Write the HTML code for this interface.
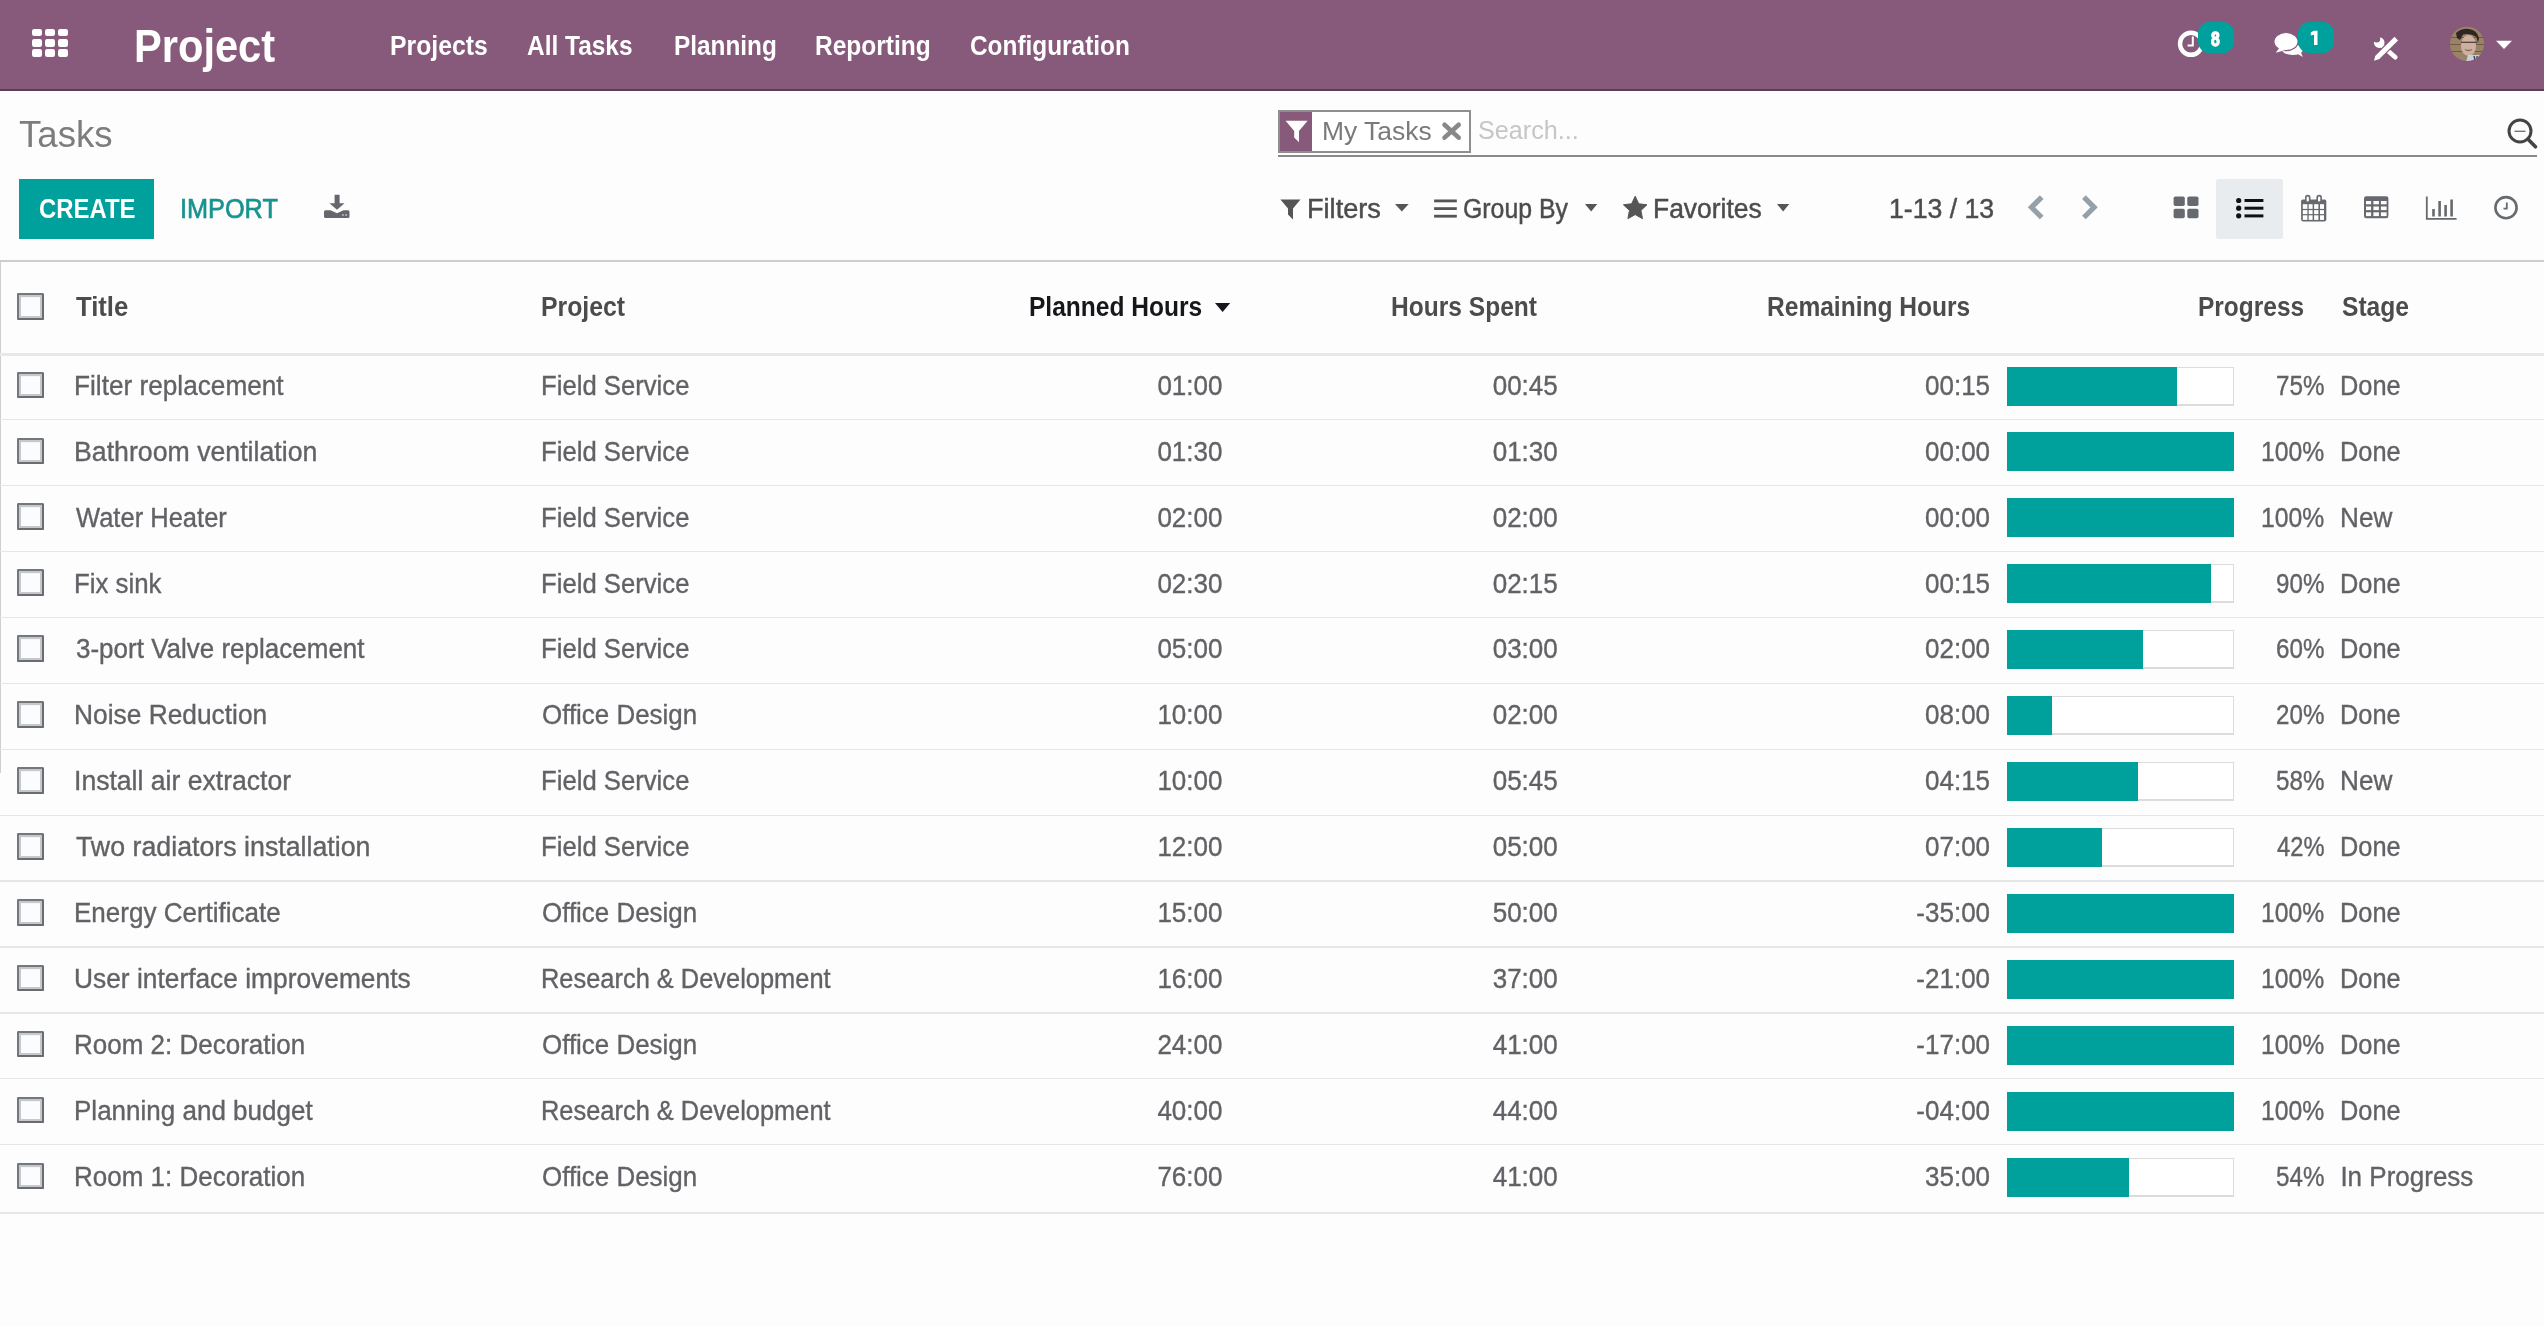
<!DOCTYPE html>
<html><head><meta charset="utf-8"><title>Tasks - Odoo</title>
<style>
html,body{margin:0;padding:0;}
body{width:2544px;height:1326px;overflow:hidden;position:relative;background:#fdfdfd;font-family:"Liberation Sans", sans-serif;}
#wrap{position:absolute;left:0;top:0;width:2544px;height:1326px;background:#fdfdfd;}
</style></head><body><div id="wrap">
<div style="position:absolute;left:0px;top:0px;width:2544px;height:89px;background:#875A7B;"></div>
<div style="position:absolute;left:0px;top:89px;width:2544px;height:2px;background:#5a3f52;"></div>
<div style="position:absolute;left:32px;top:28.7px;width:10.2px;height:7.8px;background:#ffffff;border-radius:2.2px;"></div>
<div style="position:absolute;left:32px;top:38.9px;width:10.2px;height:7.8px;background:#ffffff;border-radius:2.2px;"></div>
<div style="position:absolute;left:32px;top:49.1px;width:10.2px;height:7.8px;background:#ffffff;border-radius:2.2px;"></div>
<div style="position:absolute;left:45px;top:28.7px;width:10.2px;height:7.8px;background:#ffffff;border-radius:2.2px;"></div>
<div style="position:absolute;left:45px;top:38.9px;width:10.2px;height:7.8px;background:#ffffff;border-radius:2.2px;"></div>
<div style="position:absolute;left:45px;top:49.1px;width:10.2px;height:7.8px;background:#ffffff;border-radius:2.2px;"></div>
<div style="position:absolute;left:58px;top:28.7px;width:10.2px;height:7.8px;background:#ffffff;border-radius:2.2px;"></div>
<div style="position:absolute;left:58px;top:38.9px;width:10.2px;height:7.8px;background:#ffffff;border-radius:2.2px;"></div>
<div style="position:absolute;left:58px;top:49.1px;width:10.2px;height:7.8px;background:#ffffff;border-radius:2.2px;"></div>
<svg style="position:absolute;left:2170px;top:22px" width="40" height="44" viewBox="2170 22 40 44">
<circle cx="2191" cy="43.8" r="11" fill="none" stroke="#fff" stroke-width="4.4"/>
<path d="M2192.8 36.6 V45.4 H2187.6" fill="none" stroke="#fff" stroke-width="2"/>
</svg>
<div style="position:absolute;left:2198.3px;top:22.4px;width:35.6px;height:30.8px;background:#00A09D;border-radius:11.5px;"></div>
<svg style="position:absolute;left:2270px;top:28px" width="40" height="32" viewBox="2270 28 40 32">
<ellipse cx="2292.5" cy="49.6" rx="10.5" ry="5.4" fill="#fff"/>
<path d="M2296 53 L2302.8 57 L2299.5 49 Z" fill="#fff"/>
<ellipse cx="2286" cy="41.6" rx="12.1" ry="9.1" fill="#fff" stroke="#875A7B" stroke-width="1.2"/>
<path d="M2279.5 47.5 L2275.8 52.8 L2285.5 50 Z" fill="#fff"/>
</svg>
<div style="position:absolute;left:2297.9px;top:22.3px;width:35.8px;height:30.8px;background:#00A09D;border-radius:11.5px;"></div>
<svg style="position:absolute;left:2306px;top:28px" width="16" height="20" viewBox="2306 28 16 20"><path d="M2314 30.8 H2317.5 V45.1 H2314 V34.8 L2310.8 35.4 V32.2 Z" fill="#fff"/></svg>
<svg style="position:absolute;left:2368px;top:32px" width="34" height="32" viewBox="2368 32 34 32">
<path d="M2380 44 L2395.3 57.3" stroke="#fff" stroke-width="4.6" stroke-linecap="round"/>
<circle cx="2379.2" cy="42.6" r="5.3" fill="#fff"/>
<circle cx="2376.7" cy="39.0" r="3.5" fill="#875A7B"/>
<path d="M2394.5 36.8 L2398 40.4 L2379.3 59 L2374 60.7 L2375.2 55.9 Z" fill="#875A7B" stroke="#875A7B" stroke-width="2.4" stroke-linejoin="round"/>
<path d="M2394.5 36.8 L2398 40.4 L2379.3 59 L2374 60.7 L2375.2 55.9 Z" fill="#fff"/>
</svg>
<svg style="position:absolute;left:2449px;top:26px" width="36" height="36" viewBox="0 0 36 36">
<defs><clipPath id="av"><circle cx="18" cy="17.9" r="17.1"/></clipPath><filter id="avb" x="-10%" y="-10%" width="120%" height="120%"><feGaussianBlur stdDeviation="0.7"/></filter></defs>
<g clip-path="url(#av)"><g filter="url(#avb)">
<rect x="0" y="0" width="36" height="36" fill="#9a8266"/>
<path d="M0 11.5 H36 M0 18.5 H36 M0 25.5 H36" stroke="#6f5a46" stroke-width="1.2"/>
<path d="M7 7 Q13 2 20 3 Q28 4 30 12 L29 17 L27.5 11 Q21 7 14 8.5 L11 14 L8 12 Z" fill="#2e2622"/>
<ellipse cx="19.5" cy="19.5" rx="7.6" ry="10.5" fill="#cdb09e"/>
<path d="M12 16.3 H28" stroke="#4a3c36" stroke-width="1.2"/>
<path d="M16 23.5 Q19.5 25.5 23 23.5" stroke="#8a6456" stroke-width="1.3" fill="none"/>
<path d="M19 29 L33 29 L36 36 L17 36 Z" fill="#c9d0da"/>
<path d="M25 30 L26.5 36 M28 30 L28.5 36" stroke="#2f3e5a" stroke-width="1.3"/>
</g></g></svg>
<svg style="position:absolute;left:2494px;top:38px" width="20" height="14" viewBox="2494 38 20 14">
<path d="M2496 40.8 H2512 L2504 49 Z" fill="#fff"/></svg>
<div style="position:absolute;left:1278.4px;top:110.4px;width:192.6px;height:42.5px;background:#ffffff;box-sizing:border-box;border:2px solid #8f8f8f;"></div>
<div style="position:absolute;left:1280.4px;top:112.4px;width:31.8px;height:38.5px;background:#875A7B;"></div>
<svg style="position:absolute;left:1282px;top:118px" width="28" height="28" viewBox="1282 118 28 28">
<path d="M1285.6 120.8 H1307.6 L1299 131 V142.2 L1294.2 137.6 V131 Z" fill="#fff"/></svg>
<svg style="position:absolute;left:1440px;top:120px" width="24" height="22" viewBox="1440 120 24 22">
<path d="M1444.5 124.7 L1458.7 137.6 M1458.7 124.7 L1444.5 137.6" stroke="#888" stroke-width="4.6" stroke-linecap="round"/></svg>
<div style="position:absolute;left:1278px;top:154.6px;width:1259px;height:2.8px;background:#8a8a8a;"></div>
<svg style="position:absolute;left:2502px;top:114px" width="42" height="40" viewBox="2502 114 42 40">
<circle cx="2520" cy="131" r="11" fill="none" stroke="#444" stroke-width="3"/>
<path d="M2527.8 139 L2535.5 146.8" stroke="#444" stroke-width="3.6" stroke-linecap="round"/>
<path d="M2514.5 131.3 H2525.5" stroke="#777" stroke-width="1.4"/></svg>
<div style="position:absolute;left:18.5px;top:179.2px;width:135.8px;height:60.1px;background:#00A09D;"></div>
<svg style="position:absolute;left:320px;top:190px" width="34" height="32" viewBox="320 190 34 32">
<path d="M334.6 194.8 H339.6 V203.2 H344.5 L337 209.8 L329.4 203.2 H334.6 Z" fill="#66676d"/>
<path d="M325.5 210.3 H330.5 L337 213.2 L343.5 210.3 H348 Q349.5 210.3 349.5 211.8 V216.4 Q349.5 217.9 348 217.9 H325.5 Q324 217.9 324 216.4 V211.8 Q324 210.3 325.5 210.3 Z" fill="#66676d"/>
<rect x="342" y="214.2" width="1.8" height="1.6" fill="#b8bcc4"/><rect x="345.2" y="214.2" width="1.8" height="1.6" fill="#b8bcc4"/>
</svg>
<svg style="position:absolute;left:1276px;top:196px" width="28" height="28" viewBox="1276 196 28 28">
<path d="M1280.4 199.5 H1300.5 L1293 208.5 V219.6 L1288 214.5 V208.5 Z" fill="#555555"/></svg>
<svg style="position:absolute;left:1392.5px;top:201.6px" width="17.700000000000045" height="11.5" viewBox="1392.5 201.6 17.700000000000045 11.5"><path d="M1394.5 203.6 H1408.2 L1401.35 211.1 Z" fill="#555555"/></svg>
<svg style="position:absolute;left:1430px;top:196px" width="30" height="26" viewBox="1430 196 30 26">
<rect x="1434.1" y="199.5" width="22.7" height="2.8" fill="#555555"/>
<rect x="1434.1" y="207.2" width="22.7" height="2.8" fill="#555555"/>
<rect x="1434.1" y="214.8" width="22.7" height="2.8" fill="#555555"/></svg>
<svg style="position:absolute;left:1582.6px;top:201.6px" width="16.300000000000182" height="11.5" viewBox="1582.6 201.6 16.300000000000182 11.5"><path d="M1584.6 203.6 H1596.9 L1590.75 211.1 Z" fill="#555555"/></svg>
<svg style="position:absolute;left:1618px;top:192px" width="34" height="30" viewBox="1618 192 34 30">
<path d="M1635.20 196.20 L1638.73 203.75 L1646.99 204.77 L1640.91 210.45 L1642.49 218.63 L1635.20 214.60 L1627.91 218.63 L1629.49 210.45 L1623.41 204.77 L1631.67 203.75 Z" stroke-linejoin="round" stroke-width="1" stroke="#555555" fill="#555555"/></svg>
<svg style="position:absolute;left:1774.8px;top:201.6px" width="16.299999999999955" height="11.5" viewBox="1774.8 201.6 16.299999999999955 11.5"><path d="M1776.8 203.6 H1789.1 L1782.9499999999998 211.1 Z" fill="#555555"/></svg>
<svg style="position:absolute;left:2020px;top:192px" width="86" height="32" viewBox="2020 192 86 32">
<path d="M2041.7 197.1 L2031.5 207.3 L2041.7 217.5" fill="none" stroke="#96a0a9" stroke-width="5.2"/>
<path d="M2083.9 197.1 L2094.1 207.3 L2083.9 217.5" fill="none" stroke="#96a0a9" stroke-width="5.2"/></svg>
<div style="position:absolute;left:2216.2px;top:179.1px;width:66.8px;height:59.6px;background:#e9ecef;border-radius:2px;"></div>
<svg style="position:absolute;left:2170px;top:190px" width="360" height="36" viewBox="2170 190 360 36">
<g fill="#666a6e">
<rect x="2173.6" y="196.4" width="11.2" height="9.6" rx="1.8"/><rect x="2187.3" y="196.4" width="11.2" height="9.6" rx="1.8"/>
<rect x="2173.6" y="208.7" width="11.2" height="9.6" rx="1.8"/><rect x="2187.3" y="208.7" width="11.2" height="9.6" rx="1.8"/>
</g>
<g fill="#111">
<circle cx="2238.7" cy="200.5" r="2.6"/><circle cx="2238.7" cy="208.2" r="2.6"/><circle cx="2238.7" cy="215.8" r="2.6"/>
<rect x="2244.5" y="199" width="18.9" height="3"/><rect x="2244.5" y="206.7" width="18.9" height="3"/><rect x="2244.5" y="214.4" width="18.9" height="3"/>
</g>
<g fill="none" stroke="#666a6e">
<path d="M2426.8 196.4 V218.8 H2456.6" stroke-width="1.8"/>
<circle cx="2506" cy="207.7" r="10.6" stroke-width="2.6"/>
<path d="M2506.8 202.5 V208.6 H2503.5" stroke-width="1.8"/>
</g>
<g fill="#666a6e">
<rect x="2301.1" y="199.4" width="25.2" height="22" rx="1.8"/>
<rect x="2305" y="194.7" width="5.5" height="8.3" rx="2.7"/><rect x="2316.4" y="194.7" width="5.5" height="8.3" rx="2.7"/>
<rect x="2364" y="196.3" width="24.4" height="22" rx="2.2"/>
</g><g fill="#fdfdfd">
<rect x="2306.6" y="196.6" width="2.3" height="5" rx="1.1"/><rect x="2318" y="196.6" width="2.3" height="5" rx="1.1"/>
<rect x="2302.8" y="204.2" width="4.6" height="4.7"/>
<rect x="2308.7" y="204.2" width="3.9" height="4.7"/>
<rect x="2314.1" y="204.2" width="4.3" height="4.7"/>
<rect x="2320" y="204.2" width="4.0" height="4.7"/>
<rect x="2302.8" y="210.1" width="4.6" height="4.0"/>
<rect x="2308.7" y="210.1" width="3.9" height="4.0"/>
<rect x="2314.1" y="210.1" width="4.3" height="4.0"/>
<rect x="2320" y="210.1" width="4.0" height="4.0"/>
<rect x="2302.8" y="215.3" width="4.6" height="4.6"/>
<rect x="2308.7" y="215.3" width="3.9" height="4.6"/>
<rect x="2314.1" y="215.3" width="4.3" height="4.6"/>
<rect x="2320" y="215.3" width="4.0" height="4.6"/>
<rect x="2366" y="201.0" width="5.1" height="3.3"/>
<rect x="2373.4" y="201.0" width="5.5" height="3.3"/>
<rect x="2380.9" y="201.0" width="5.7" height="3.3"/>
<rect x="2366" y="206.5" width="5.1" height="3.6"/>
<rect x="2373.4" y="206.5" width="5.5" height="3.6"/>
<rect x="2380.9" y="206.5" width="5.7" height="3.6"/>
<rect x="2366" y="212.3" width="5.1" height="3.8"/>
<rect x="2373.4" y="212.3" width="5.5" height="3.8"/>
<rect x="2380.9" y="212.3" width="5.7" height="3.8"/>
</g>
<g fill="#666a6e">
<rect x="2432.2" y="209" width="2.6" height="7.5"/><rect x="2438.3" y="201" width="2.6" height="15.5"/>
<rect x="2444.3" y="205" width="2.6" height="11.5"/><rect x="2450.3" y="199.5" width="2.6" height="17"/>
</g>
</svg>
<div style="position:absolute;left:0px;top:260px;width:2544px;height:2.2px;background:#cdcdcd;"></div>
<div style="position:absolute;left:0px;top:262px;width:1.4px;height:511px;background:#cfcfcf;"></div>
<div style="position:absolute;left:0px;top:353.2px;width:2544px;height:2.8px;background:#e7e8ea;"></div>
<div style="position:absolute;left:17px;top:293.3px;width:26.8px;height:26.6px;box-sizing:border-box;border:2.3px solid #74777b;border-right-color:#6a6c70;border-bottom-color:#6a6c70;border-radius:1.5px;background:#fbfcfd;box-shadow:inset 0 0 0 2px #c5c8cc,inset 0 3px 1px -1px #b5b9bd"></div>
<svg style="position:absolute;left:1212.6px;top:300.9px" width="19.200000000000045" height="12.900000000000034" viewBox="1212.6 300.9 19.200000000000045 12.900000000000034"><path d="M1214.6 302.9 H1229.8 L1222.1999999999998 311.8 Z" fill="#15171a"/></svg>
<div style="position:absolute;left:17px;top:371.6px;width:26.8px;height:26.6px;box-sizing:border-box;border:2.3px solid #74777b;border-right-color:#6a6c70;border-bottom-color:#6a6c70;border-radius:1.5px;background:#fbfcfd;box-shadow:inset 0 0 0 2px #c5c8cc,inset 0 3px 1px -1px #b5b9bd"></div>
<div style="position:absolute;left:2006.5px;top:366.50px;width:227.5px;height:39px;box-sizing:border-box;border:1px solid #dcdcdc;border-bottom-width:2px;background:#fff"></div>
<div style="position:absolute;left:2006.5px;top:366.5px;width:170.625px;height:39px;background:#00A09D;"></div>
<div style="position:absolute;left:0px;top:419.0px;width:2544px;height:1.3px;background:#e6e6e6;"></div>
<div style="position:absolute;left:17px;top:437.52000000000004px;width:26.8px;height:26.6px;box-sizing:border-box;border:2.3px solid #74777b;border-right-color:#6a6c70;border-bottom-color:#6a6c70;border-radius:1.5px;background:#fbfcfd;box-shadow:inset 0 0 0 2px #c5c8cc,inset 0 3px 1px -1px #b5b9bd"></div>
<div style="position:absolute;left:2006.5px;top:432.42px;width:227.5px;height:39px;box-sizing:border-box;border:1px solid #dcdcdc;border-bottom-width:2px;background:#fff"></div>
<div style="position:absolute;left:2006.5px;top:432.42px;width:227.5px;height:39px;background:#00A09D;"></div>
<div style="position:absolute;left:0px;top:484.92px;width:2544px;height:1.3px;background:#e6e6e6;"></div>
<div style="position:absolute;left:17px;top:503.44000000000005px;width:26.8px;height:26.6px;box-sizing:border-box;border:2.3px solid #74777b;border-right-color:#6a6c70;border-bottom-color:#6a6c70;border-radius:1.5px;background:#fbfcfd;box-shadow:inset 0 0 0 2px #c5c8cc,inset 0 3px 1px -1px #b5b9bd"></div>
<div style="position:absolute;left:2006.5px;top:498.34px;width:227.5px;height:39px;box-sizing:border-box;border:1px solid #dcdcdc;border-bottom-width:2px;background:#fff"></div>
<div style="position:absolute;left:2006.5px;top:498.34px;width:227.5px;height:39px;background:#00A09D;"></div>
<div style="position:absolute;left:0px;top:550.84px;width:2544px;height:1.3px;background:#e6e6e6;"></div>
<div style="position:absolute;left:17px;top:569.36px;width:26.8px;height:26.6px;box-sizing:border-box;border:2.3px solid #74777b;border-right-color:#6a6c70;border-bottom-color:#6a6c70;border-radius:1.5px;background:#fbfcfd;box-shadow:inset 0 0 0 2px #c5c8cc,inset 0 3px 1px -1px #b5b9bd"></div>
<div style="position:absolute;left:2006.5px;top:564.26px;width:227.5px;height:39px;box-sizing:border-box;border:1px solid #dcdcdc;border-bottom-width:2px;background:#fff"></div>
<div style="position:absolute;left:2006.5px;top:564.26px;width:204.75px;height:39px;background:#00A09D;"></div>
<div style="position:absolute;left:0px;top:616.76px;width:2544px;height:1.3px;background:#e6e6e6;"></div>
<div style="position:absolute;left:17px;top:635.28px;width:26.8px;height:26.6px;box-sizing:border-box;border:2.3px solid #74777b;border-right-color:#6a6c70;border-bottom-color:#6a6c70;border-radius:1.5px;background:#fbfcfd;box-shadow:inset 0 0 0 2px #c5c8cc,inset 0 3px 1px -1px #b5b9bd"></div>
<div style="position:absolute;left:2006.5px;top:630.18px;width:227.5px;height:39px;box-sizing:border-box;border:1px solid #dcdcdc;border-bottom-width:2px;background:#fff"></div>
<div style="position:absolute;left:2006.5px;top:630.18px;width:136.5px;height:39px;background:#00A09D;"></div>
<div style="position:absolute;left:0px;top:682.68px;width:2544px;height:1.3px;background:#e6e6e6;"></div>
<div style="position:absolute;left:17px;top:701.2px;width:26.8px;height:26.6px;box-sizing:border-box;border:2.3px solid #74777b;border-right-color:#6a6c70;border-bottom-color:#6a6c70;border-radius:1.5px;background:#fbfcfd;box-shadow:inset 0 0 0 2px #c5c8cc,inset 0 3px 1px -1px #b5b9bd"></div>
<div style="position:absolute;left:2006.5px;top:696.10px;width:227.5px;height:39px;box-sizing:border-box;border:1px solid #dcdcdc;border-bottom-width:2px;background:#fff"></div>
<div style="position:absolute;left:2006.5px;top:696.1px;width:45.5px;height:39px;background:#00A09D;"></div>
<div style="position:absolute;left:0px;top:748.6px;width:2544px;height:1.3px;background:#e6e6e6;"></div>
<div style="position:absolute;left:17px;top:767.12px;width:26.8px;height:26.6px;box-sizing:border-box;border:2.3px solid #74777b;border-right-color:#6a6c70;border-bottom-color:#6a6c70;border-radius:1.5px;background:#fbfcfd;box-shadow:inset 0 0 0 2px #c5c8cc,inset 0 3px 1px -1px #b5b9bd"></div>
<div style="position:absolute;left:2006.5px;top:762.02px;width:227.5px;height:39px;box-sizing:border-box;border:1px solid #dcdcdc;border-bottom-width:2px;background:#fff"></div>
<div style="position:absolute;left:2006.5px;top:762.02px;width:131.95px;height:39px;background:#00A09D;"></div>
<div style="position:absolute;left:0px;top:814.52px;width:2544px;height:1.3px;background:#e6e6e6;"></div>
<div style="position:absolute;left:17px;top:833.04px;width:26.8px;height:26.6px;box-sizing:border-box;border:2.3px solid #74777b;border-right-color:#6a6c70;border-bottom-color:#6a6c70;border-radius:1.5px;background:#fbfcfd;box-shadow:inset 0 0 0 2px #c5c8cc,inset 0 3px 1px -1px #b5b9bd"></div>
<div style="position:absolute;left:2006.5px;top:827.94px;width:227.5px;height:39px;box-sizing:border-box;border:1px solid #dcdcdc;border-bottom-width:2px;background:#fff"></div>
<div style="position:absolute;left:2006.5px;top:827.94px;width:95.55px;height:39px;background:#00A09D;"></div>
<div style="position:absolute;left:0px;top:880.44px;width:2544px;height:1.3px;background:#e6e6e6;"></div>
<div style="position:absolute;left:17px;top:898.96px;width:26.8px;height:26.6px;box-sizing:border-box;border:2.3px solid #74777b;border-right-color:#6a6c70;border-bottom-color:#6a6c70;border-radius:1.5px;background:#fbfcfd;box-shadow:inset 0 0 0 2px #c5c8cc,inset 0 3px 1px -1px #b5b9bd"></div>
<div style="position:absolute;left:2006.5px;top:893.86px;width:227.5px;height:39px;box-sizing:border-box;border:1px solid #dcdcdc;border-bottom-width:2px;background:#fff"></div>
<div style="position:absolute;left:2006.5px;top:893.86px;width:227.5px;height:39px;background:#00A09D;"></div>
<div style="position:absolute;left:0px;top:946.36px;width:2544px;height:1.3px;background:#e6e6e6;"></div>
<div style="position:absolute;left:17px;top:964.88px;width:26.8px;height:26.6px;box-sizing:border-box;border:2.3px solid #74777b;border-right-color:#6a6c70;border-bottom-color:#6a6c70;border-radius:1.5px;background:#fbfcfd;box-shadow:inset 0 0 0 2px #c5c8cc,inset 0 3px 1px -1px #b5b9bd"></div>
<div style="position:absolute;left:2006.5px;top:959.78px;width:227.5px;height:39px;box-sizing:border-box;border:1px solid #dcdcdc;border-bottom-width:2px;background:#fff"></div>
<div style="position:absolute;left:2006.5px;top:959.78px;width:227.5px;height:39px;background:#00A09D;"></div>
<div style="position:absolute;left:0px;top:1012.28px;width:2544px;height:1.3px;background:#e6e6e6;"></div>
<div style="position:absolute;left:17px;top:1030.8000000000002px;width:26.8px;height:26.6px;box-sizing:border-box;border:2.3px solid #74777b;border-right-color:#6a6c70;border-bottom-color:#6a6c70;border-radius:1.5px;background:#fbfcfd;box-shadow:inset 0 0 0 2px #c5c8cc,inset 0 3px 1px -1px #b5b9bd"></div>
<div style="position:absolute;left:2006.5px;top:1025.70px;width:227.5px;height:39px;box-sizing:border-box;border:1px solid #dcdcdc;border-bottom-width:2px;background:#fff"></div>
<div style="position:absolute;left:2006.5px;top:1025.7px;width:227.5px;height:39px;background:#00A09D;"></div>
<div style="position:absolute;left:0px;top:1078.2px;width:2544px;height:1.3px;background:#e6e6e6;"></div>
<div style="position:absolute;left:17px;top:1096.72px;width:26.8px;height:26.6px;box-sizing:border-box;border:2.3px solid #74777b;border-right-color:#6a6c70;border-bottom-color:#6a6c70;border-radius:1.5px;background:#fbfcfd;box-shadow:inset 0 0 0 2px #c5c8cc,inset 0 3px 1px -1px #b5b9bd"></div>
<div style="position:absolute;left:2006.5px;top:1091.62px;width:227.5px;height:39px;box-sizing:border-box;border:1px solid #dcdcdc;border-bottom-width:2px;background:#fff"></div>
<div style="position:absolute;left:2006.5px;top:1091.62px;width:227.5px;height:39px;background:#00A09D;"></div>
<div style="position:absolute;left:0px;top:1144.12px;width:2544px;height:1.3px;background:#e6e6e6;"></div>
<div style="position:absolute;left:17px;top:1162.6399999999999px;width:26.8px;height:26.6px;box-sizing:border-box;border:2.3px solid #74777b;border-right-color:#6a6c70;border-bottom-color:#6a6c70;border-radius:1.5px;background:#fbfcfd;box-shadow:inset 0 0 0 2px #c5c8cc,inset 0 3px 1px -1px #b5b9bd"></div>
<div style="position:absolute;left:2006.5px;top:1157.54px;width:227.5px;height:39px;box-sizing:border-box;border:1px solid #dcdcdc;border-bottom-width:2px;background:#fff"></div>
<div style="position:absolute;left:2006.5px;top:1157.54px;width:122.85px;height:39px;background:#00A09D;"></div>
<div style="position:absolute;left:0px;top:1212px;width:2544px;height:2px;background:#e6e6e6;"></div>
<div style="position:absolute;left:133.99px;top:23.26px;font-size:46px;line-height:46px;font-weight:bold;color:#ffffff;white-space:nowrap;transform:scale(0.9048,1.0000);transform-origin:0 38.94px;">Project</div>
<div style="position:absolute;left:389.58px;top:33.34px;font-size:27px;line-height:27px;font-weight:bold;color:#ffffff;white-space:nowrap;transform:scale(0.9165,1.0000);transform-origin:0 22.86px;">Projects</div>
<div style="position:absolute;left:527.10px;top:33.34px;font-size:27px;line-height:27px;font-weight:bold;color:#ffffff;white-space:nowrap;transform:scale(0.9053,1.0000);transform-origin:0 22.86px;">All Tasks</div>
<div style="position:absolute;left:673.60px;top:33.34px;font-size:27px;line-height:27px;font-weight:bold;color:#ffffff;white-space:nowrap;transform:scale(0.9013,1.0000);transform-origin:0 22.86px;">Planning</div>
<div style="position:absolute;left:815.09px;top:33.34px;font-size:27px;line-height:27px;font-weight:bold;color:#ffffff;white-space:nowrap;transform:scale(0.9081,1.0000);transform-origin:0 22.86px;">Reporting</div>
<div style="position:absolute;left:969.70px;top:33.34px;font-size:27px;line-height:27px;font-weight:bold;color:#ffffff;white-space:nowrap;transform:scale(0.9033,1.0000);transform-origin:0 22.86px;">Configuration</div>
<div style="position:absolute;left:2211.20px;top:28.42px;font-size:21px;line-height:21px;font-weight:bold;color:#ffffff;white-space:nowrap;transform:scale(0.7500,1.0000);transform-origin:0 17.78px;-webkit-text-stroke:1.3px #fff;">8</div>
<div style="position:absolute;left:19.20px;top:116.18px;font-size:37px;line-height:37px;font-weight:normal;color:#7d7d7d;white-space:nowrap;transform:scale(0.9907,1.0000);transform-origin:0 31.32px;">Tasks</div>
<div style="position:absolute;left:1322.39px;top:118.74px;font-size:25px;line-height:25px;font-weight:normal;color:#7a7a7a;white-space:nowrap;transform:scale(1.0573,1.0000);transform-origin:0 21.16px;">My Tasks</div>
<div style="position:absolute;left:1477.89px;top:118.14px;font-size:25px;line-height:25px;font-weight:normal;color:#c6c6c6;white-space:nowrap;transform:scale(1.0082,1.0000);transform-origin:0 21.16px;">Search...</div>
<div style="position:absolute;left:38.81px;top:196.24px;font-size:27px;line-height:27px;font-weight:bold;color:#ffffff;white-space:nowrap;transform:scale(0.8860,1.0000);transform-origin:0 22.86px;">CREATE</div>
<div style="position:absolute;left:180.03px;top:196.24px;font-size:27px;line-height:27px;font-weight:normal;color:#17938f;white-space:nowrap;transform:scale(0.9361,1.0000);transform-origin:0 22.86px;-webkit-text-stroke:0.65px #17938f;">IMPORT</div>
<div style="position:absolute;left:1306.89px;top:195.74px;font-size:27px;line-height:27px;font-weight:normal;color:#4c4c4c;white-space:nowrap;transform:scale(1.0057,1.0000);transform-origin:0 22.86px;-webkit-text-stroke:0.45px #4c4c4c;">Filters</div>
<div style="position:absolute;left:1462.98px;top:195.74px;font-size:27px;line-height:27px;font-weight:normal;color:#4c4c4c;white-space:nowrap;transform:scale(0.9203,1.0000);transform-origin:0 22.86px;-webkit-text-stroke:0.45px #4c4c4c;">Group By</div>
<div style="position:absolute;left:1653.24px;top:195.74px;font-size:27px;line-height:27px;font-weight:normal;color:#4c4c4c;white-space:nowrap;transform:scale(0.9794,1.0000);transform-origin:0 22.86px;-webkit-text-stroke:0.45px #4c4c4c;">Favorites</div>
<div style="position:absolute;left:1889.33px;top:195.74px;font-size:27px;line-height:27px;font-weight:normal;color:#4c4c4c;white-space:nowrap;transform:scale(0.9869,1.0000);transform-origin:0 22.86px;-webkit-text-stroke:0.45px #4c4c4c;">1-13 / 13</div>
<div style="position:absolute;left:76.00px;top:294.34px;font-size:27px;line-height:27px;font-weight:bold;color:#4c4c4c;white-space:nowrap;transform:scale(0.9491,1.0000);transform-origin:0 22.86px;">Title</div>
<div style="position:absolute;left:540.98px;top:294.34px;font-size:27px;line-height:27px;font-weight:bold;color:#4c4c4c;white-space:nowrap;transform:scale(0.9189,1.0000);transform-origin:0 22.86px;">Project</div>
<div style="position:absolute;left:1029.49px;top:294.34px;font-size:27px;line-height:27px;font-weight:bold;color:#15171a;white-space:nowrap;transform:scale(0.9087,1.0000);transform-origin:0 22.86px;">Planned Hours</div>
<div style="position:absolute;left:1391.49px;top:294.34px;font-size:27px;line-height:27px;font-weight:bold;color:#4c4c4c;white-space:nowrap;transform:scale(0.9096,1.0000);transform-origin:0 22.86px;">Hours Spent</div>
<div style="position:absolute;left:1766.59px;top:294.34px;font-size:27px;line-height:27px;font-weight:bold;color:#4c4c4c;white-space:nowrap;transform:scale(0.9092,1.0000);transform-origin:0 22.86px;">Remaining Hours</div>
<div style="position:absolute;left:2198.39px;top:294.34px;font-size:27px;line-height:27px;font-weight:bold;color:#4c4c4c;white-space:nowrap;transform:scale(0.9066,1.0000);transform-origin:0 22.86px;">Progress</div>
<div style="position:absolute;left:2341.80px;top:294.34px;font-size:27px;line-height:27px;font-weight:bold;color:#4c4c4c;white-space:nowrap;transform:scale(0.9115,1.0000);transform-origin:0 22.86px;">Stage</div>
<div style="position:absolute;left:74.39px;top:372.79px;font-size:26px;line-height:26px;font-weight:normal;color:#626266;white-space:nowrap;transform:scale(1.0075,1.0500);transform-origin:0 22.01px;-webkit-text-stroke:0.35px #626266;">Filter replacement</div>
<div style="position:absolute;left:541.42px;top:372.79px;font-size:26px;line-height:26px;font-weight:normal;color:#626266;white-space:nowrap;transform:scale(0.9877,1.0500);transform-origin:0 22.01px;-webkit-text-stroke:0.35px #626266;">Field Service</div>
<div style="position:absolute;left:1157.40px;top:372.79px;font-size:26px;line-height:26px;font-weight:normal;color:#626266;white-space:nowrap;transform:scale(1.0000,1.0500);transform-origin:0 22.01px;-webkit-text-stroke:0.35px #626266;">01:00</div>
<div style="position:absolute;left:1492.70px;top:372.79px;font-size:26px;line-height:26px;font-weight:normal;color:#626266;white-space:nowrap;transform:scale(1.0000,1.0500);transform-origin:0 22.01px;-webkit-text-stroke:0.35px #626266;">00:45</div>
<div style="position:absolute;left:1925.00px;top:372.79px;font-size:26px;line-height:26px;font-weight:normal;color:#626266;white-space:nowrap;transform:scale(1.0000,1.0500);transform-origin:0 22.01px;-webkit-text-stroke:0.35px #626266;">00:15</div>
<div style="position:absolute;left:2276.27px;top:372.79px;font-size:26px;line-height:26px;font-weight:normal;color:#626266;white-space:nowrap;transform:scale(0.9309,1.0500);transform-origin:0 22.01px;-webkit-text-stroke:0.35px #626266;">75%</div>
<div style="position:absolute;left:2340.45px;top:372.79px;font-size:26px;line-height:26px;font-weight:normal;color:#626266;white-space:nowrap;transform:scale(0.9766,1.0500);transform-origin:0 22.01px;-webkit-text-stroke:0.35px #626266;">Done</div>
<div style="position:absolute;left:74.35px;top:438.71px;font-size:26px;line-height:26px;font-weight:normal;color:#626266;white-space:nowrap;transform:scale(1.0267,1.0500);transform-origin:0 22.01px;-webkit-text-stroke:0.35px #626266;">Bathroom ventilation</div>
<div style="position:absolute;left:541.42px;top:438.71px;font-size:26px;line-height:26px;font-weight:normal;color:#626266;white-space:nowrap;transform:scale(0.9877,1.0500);transform-origin:0 22.01px;-webkit-text-stroke:0.35px #626266;">Field Service</div>
<div style="position:absolute;left:1157.40px;top:438.71px;font-size:26px;line-height:26px;font-weight:normal;color:#626266;white-space:nowrap;transform:scale(1.0000,1.0500);transform-origin:0 22.01px;-webkit-text-stroke:0.35px #626266;">01:30</div>
<div style="position:absolute;left:1492.70px;top:438.71px;font-size:26px;line-height:26px;font-weight:normal;color:#626266;white-space:nowrap;transform:scale(1.0000,1.0500);transform-origin:0 22.01px;-webkit-text-stroke:0.35px #626266;">01:30</div>
<div style="position:absolute;left:1925.00px;top:438.71px;font-size:26px;line-height:26px;font-weight:normal;color:#626266;white-space:nowrap;transform:scale(1.0000,1.0500);transform-origin:0 22.01px;-webkit-text-stroke:0.35px #626266;">00:00</div>
<div style="position:absolute;left:2261.45px;top:438.71px;font-size:26px;line-height:26px;font-weight:normal;color:#626266;white-space:nowrap;transform:scale(0.9514,1.0500);transform-origin:0 22.01px;-webkit-text-stroke:0.35px #626266;">100%</div>
<div style="position:absolute;left:2340.45px;top:438.71px;font-size:26px;line-height:26px;font-weight:normal;color:#626266;white-space:nowrap;transform:scale(0.9766,1.0500);transform-origin:0 22.01px;-webkit-text-stroke:0.35px #626266;">Done</div>
<div style="position:absolute;left:76.40px;top:504.63px;font-size:26px;line-height:26px;font-weight:normal;color:#626266;white-space:nowrap;transform:scale(0.9819,1.0500);transform-origin:0 22.01px;-webkit-text-stroke:0.35px #626266;">Water Heater</div>
<div style="position:absolute;left:541.42px;top:504.63px;font-size:26px;line-height:26px;font-weight:normal;color:#626266;white-space:nowrap;transform:scale(0.9877,1.0500);transform-origin:0 22.01px;-webkit-text-stroke:0.35px #626266;">Field Service</div>
<div style="position:absolute;left:1157.40px;top:504.63px;font-size:26px;line-height:26px;font-weight:normal;color:#626266;white-space:nowrap;transform:scale(1.0000,1.0500);transform-origin:0 22.01px;-webkit-text-stroke:0.35px #626266;">02:00</div>
<div style="position:absolute;left:1492.70px;top:504.63px;font-size:26px;line-height:26px;font-weight:normal;color:#626266;white-space:nowrap;transform:scale(1.0000,1.0500);transform-origin:0 22.01px;-webkit-text-stroke:0.35px #626266;">02:00</div>
<div style="position:absolute;left:1925.00px;top:504.63px;font-size:26px;line-height:26px;font-weight:normal;color:#626266;white-space:nowrap;transform:scale(1.0000,1.0500);transform-origin:0 22.01px;-webkit-text-stroke:0.35px #626266;">00:00</div>
<div style="position:absolute;left:2261.45px;top:504.63px;font-size:26px;line-height:26px;font-weight:normal;color:#626266;white-space:nowrap;transform:scale(0.9514,1.0500);transform-origin:0 22.01px;-webkit-text-stroke:0.35px #626266;">100%</div>
<div style="position:absolute;left:2340.39px;top:504.63px;font-size:26px;line-height:26px;font-weight:normal;color:#626266;white-space:nowrap;transform:scale(1.0072,1.0500);transform-origin:0 22.01px;-webkit-text-stroke:0.35px #626266;">New</div>
<div style="position:absolute;left:74.41px;top:570.55px;font-size:26px;line-height:26px;font-weight:normal;color:#626266;white-space:nowrap;transform:scale(0.9929,1.0500);transform-origin:0 22.01px;-webkit-text-stroke:0.35px #626266;">Fix sink</div>
<div style="position:absolute;left:541.42px;top:570.55px;font-size:26px;line-height:26px;font-weight:normal;color:#626266;white-space:nowrap;transform:scale(0.9877,1.0500);transform-origin:0 22.01px;-webkit-text-stroke:0.35px #626266;">Field Service</div>
<div style="position:absolute;left:1157.40px;top:570.55px;font-size:26px;line-height:26px;font-weight:normal;color:#626266;white-space:nowrap;transform:scale(1.0000,1.0500);transform-origin:0 22.01px;-webkit-text-stroke:0.35px #626266;">02:30</div>
<div style="position:absolute;left:1492.70px;top:570.55px;font-size:26px;line-height:26px;font-weight:normal;color:#626266;white-space:nowrap;transform:scale(1.0000,1.0500);transform-origin:0 22.01px;-webkit-text-stroke:0.35px #626266;">02:15</div>
<div style="position:absolute;left:1925.00px;top:570.55px;font-size:26px;line-height:26px;font-weight:normal;color:#626266;white-space:nowrap;transform:scale(1.0000,1.0500);transform-origin:0 22.01px;-webkit-text-stroke:0.35px #626266;">00:15</div>
<div style="position:absolute;left:2276.27px;top:570.55px;font-size:26px;line-height:26px;font-weight:normal;color:#626266;white-space:nowrap;transform:scale(0.9309,1.0500);transform-origin:0 22.01px;-webkit-text-stroke:0.35px #626266;">90%</div>
<div style="position:absolute;left:2340.45px;top:570.55px;font-size:26px;line-height:26px;font-weight:normal;color:#626266;white-space:nowrap;transform:scale(0.9766,1.0500);transform-origin:0 22.01px;-webkit-text-stroke:0.35px #626266;">Done</div>
<div style="position:absolute;left:76.40px;top:636.47px;font-size:26px;line-height:26px;font-weight:normal;color:#626266;white-space:nowrap;transform:scale(0.9999,1.0500);transform-origin:0 22.01px;-webkit-text-stroke:0.35px #626266;">3-port Valve replacement</div>
<div style="position:absolute;left:541.42px;top:636.47px;font-size:26px;line-height:26px;font-weight:normal;color:#626266;white-space:nowrap;transform:scale(0.9877,1.0500);transform-origin:0 22.01px;-webkit-text-stroke:0.35px #626266;">Field Service</div>
<div style="position:absolute;left:1157.40px;top:636.47px;font-size:26px;line-height:26px;font-weight:normal;color:#626266;white-space:nowrap;transform:scale(1.0000,1.0500);transform-origin:0 22.01px;-webkit-text-stroke:0.35px #626266;">05:00</div>
<div style="position:absolute;left:1492.70px;top:636.47px;font-size:26px;line-height:26px;font-weight:normal;color:#626266;white-space:nowrap;transform:scale(1.0000,1.0500);transform-origin:0 22.01px;-webkit-text-stroke:0.35px #626266;">03:00</div>
<div style="position:absolute;left:1925.00px;top:636.47px;font-size:26px;line-height:26px;font-weight:normal;color:#626266;white-space:nowrap;transform:scale(1.0000,1.0500);transform-origin:0 22.01px;-webkit-text-stroke:0.35px #626266;">02:00</div>
<div style="position:absolute;left:2276.27px;top:636.47px;font-size:26px;line-height:26px;font-weight:normal;color:#626266;white-space:nowrap;transform:scale(0.9309,1.0500);transform-origin:0 22.01px;-webkit-text-stroke:0.35px #626266;">60%</div>
<div style="position:absolute;left:2340.45px;top:636.47px;font-size:26px;line-height:26px;font-weight:normal;color:#626266;white-space:nowrap;transform:scale(0.9766,1.0500);transform-origin:0 22.01px;-webkit-text-stroke:0.35px #626266;">Done</div>
<div style="position:absolute;left:74.37px;top:702.39px;font-size:26px;line-height:26px;font-weight:normal;color:#626266;white-space:nowrap;transform:scale(1.0127,1.0500);transform-origin:0 22.01px;-webkit-text-stroke:0.35px #626266;">Noise Reduction</div>
<div style="position:absolute;left:542.40px;top:702.39px;font-size:26px;line-height:26px;font-weight:normal;color:#626266;white-space:nowrap;transform:scale(0.9972,1.0500);transform-origin:0 22.01px;-webkit-text-stroke:0.35px #626266;">Office Design</div>
<div style="position:absolute;left:1157.40px;top:702.39px;font-size:26px;line-height:26px;font-weight:normal;color:#626266;white-space:nowrap;transform:scale(1.0000,1.0500);transform-origin:0 22.01px;-webkit-text-stroke:0.35px #626266;">10:00</div>
<div style="position:absolute;left:1492.70px;top:702.39px;font-size:26px;line-height:26px;font-weight:normal;color:#626266;white-space:nowrap;transform:scale(1.0000,1.0500);transform-origin:0 22.01px;-webkit-text-stroke:0.35px #626266;">02:00</div>
<div style="position:absolute;left:1925.00px;top:702.39px;font-size:26px;line-height:26px;font-weight:normal;color:#626266;white-space:nowrap;transform:scale(1.0000,1.0500);transform-origin:0 22.01px;-webkit-text-stroke:0.35px #626266;">08:00</div>
<div style="position:absolute;left:2276.27px;top:702.39px;font-size:26px;line-height:26px;font-weight:normal;color:#626266;white-space:nowrap;transform:scale(0.9309,1.0500);transform-origin:0 22.01px;-webkit-text-stroke:0.35px #626266;">20%</div>
<div style="position:absolute;left:2340.45px;top:702.39px;font-size:26px;line-height:26px;font-weight:normal;color:#626266;white-space:nowrap;transform:scale(0.9766,1.0500);transform-origin:0 22.01px;-webkit-text-stroke:0.35px #626266;">Done</div>
<div style="position:absolute;left:74.36px;top:768.31px;font-size:26px;line-height:26px;font-weight:normal;color:#626266;white-space:nowrap;transform:scale(1.0221,1.0500);transform-origin:0 22.01px;-webkit-text-stroke:0.35px #626266;">Install air extractor</div>
<div style="position:absolute;left:541.42px;top:768.31px;font-size:26px;line-height:26px;font-weight:normal;color:#626266;white-space:nowrap;transform:scale(0.9877,1.0500);transform-origin:0 22.01px;-webkit-text-stroke:0.35px #626266;">Field Service</div>
<div style="position:absolute;left:1157.40px;top:768.31px;font-size:26px;line-height:26px;font-weight:normal;color:#626266;white-space:nowrap;transform:scale(1.0000,1.0500);transform-origin:0 22.01px;-webkit-text-stroke:0.35px #626266;">10:00</div>
<div style="position:absolute;left:1492.70px;top:768.31px;font-size:26px;line-height:26px;font-weight:normal;color:#626266;white-space:nowrap;transform:scale(1.0000,1.0500);transform-origin:0 22.01px;-webkit-text-stroke:0.35px #626266;">05:45</div>
<div style="position:absolute;left:1925.00px;top:768.31px;font-size:26px;line-height:26px;font-weight:normal;color:#626266;white-space:nowrap;transform:scale(1.0000,1.0500);transform-origin:0 22.01px;-webkit-text-stroke:0.35px #626266;">04:15</div>
<div style="position:absolute;left:2276.27px;top:768.31px;font-size:26px;line-height:26px;font-weight:normal;color:#626266;white-space:nowrap;transform:scale(0.9309,1.0500);transform-origin:0 22.01px;-webkit-text-stroke:0.35px #626266;">58%</div>
<div style="position:absolute;left:2340.39px;top:768.31px;font-size:26px;line-height:26px;font-weight:normal;color:#626266;white-space:nowrap;transform:scale(1.0072,1.0500);transform-origin:0 22.01px;-webkit-text-stroke:0.35px #626266;">New</div>
<div style="position:absolute;left:76.40px;top:834.23px;font-size:26px;line-height:26px;font-weight:normal;color:#626266;white-space:nowrap;transform:scale(1.0292,1.0500);transform-origin:0 22.01px;-webkit-text-stroke:0.35px #626266;">Two radiators installation</div>
<div style="position:absolute;left:541.42px;top:834.23px;font-size:26px;line-height:26px;font-weight:normal;color:#626266;white-space:nowrap;transform:scale(0.9877,1.0500);transform-origin:0 22.01px;-webkit-text-stroke:0.35px #626266;">Field Service</div>
<div style="position:absolute;left:1157.40px;top:834.23px;font-size:26px;line-height:26px;font-weight:normal;color:#626266;white-space:nowrap;transform:scale(1.0000,1.0500);transform-origin:0 22.01px;-webkit-text-stroke:0.35px #626266;">12:00</div>
<div style="position:absolute;left:1492.70px;top:834.23px;font-size:26px;line-height:26px;font-weight:normal;color:#626266;white-space:nowrap;transform:scale(1.0000,1.0500);transform-origin:0 22.01px;-webkit-text-stroke:0.35px #626266;">05:00</div>
<div style="position:absolute;left:1925.00px;top:834.23px;font-size:26px;line-height:26px;font-weight:normal;color:#626266;white-space:nowrap;transform:scale(1.0000,1.0500);transform-origin:0 22.01px;-webkit-text-stroke:0.35px #626266;">07:00</div>
<div style="position:absolute;left:2277.20px;top:834.23px;font-size:26px;line-height:26px;font-weight:normal;color:#626266;white-space:nowrap;transform:scale(0.9129,1.0500);transform-origin:0 22.01px;-webkit-text-stroke:0.35px #626266;">42%</div>
<div style="position:absolute;left:2340.45px;top:834.23px;font-size:26px;line-height:26px;font-weight:normal;color:#626266;white-space:nowrap;transform:scale(0.9766,1.0500);transform-origin:0 22.01px;-webkit-text-stroke:0.35px #626266;">Done</div>
<div style="position:absolute;left:74.40px;top:900.15px;font-size:26px;line-height:26px;font-weight:normal;color:#626266;white-space:nowrap;transform:scale(1.0006,1.0500);transform-origin:0 22.01px;-webkit-text-stroke:0.35px #626266;">Energy Certificate</div>
<div style="position:absolute;left:542.40px;top:900.15px;font-size:26px;line-height:26px;font-weight:normal;color:#626266;white-space:nowrap;transform:scale(0.9972,1.0500);transform-origin:0 22.01px;-webkit-text-stroke:0.35px #626266;">Office Design</div>
<div style="position:absolute;left:1157.40px;top:900.15px;font-size:26px;line-height:26px;font-weight:normal;color:#626266;white-space:nowrap;transform:scale(1.0000,1.0500);transform-origin:0 22.01px;-webkit-text-stroke:0.35px #626266;">15:00</div>
<div style="position:absolute;left:1492.70px;top:900.15px;font-size:26px;line-height:26px;font-weight:normal;color:#626266;white-space:nowrap;transform:scale(1.0000,1.0500);transform-origin:0 22.01px;-webkit-text-stroke:0.35px #626266;">50:00</div>
<div style="position:absolute;left:1916.34px;top:900.15px;font-size:26px;line-height:26px;font-weight:normal;color:#626266;white-space:nowrap;transform:scale(1.0000,1.0500);transform-origin:0 22.01px;-webkit-text-stroke:0.35px #626266;">-35:00</div>
<div style="position:absolute;left:2261.45px;top:900.15px;font-size:26px;line-height:26px;font-weight:normal;color:#626266;white-space:nowrap;transform:scale(0.9514,1.0500);transform-origin:0 22.01px;-webkit-text-stroke:0.35px #626266;">100%</div>
<div style="position:absolute;left:2340.45px;top:900.15px;font-size:26px;line-height:26px;font-weight:normal;color:#626266;white-space:nowrap;transform:scale(0.9766,1.0500);transform-origin:0 22.01px;-webkit-text-stroke:0.35px #626266;">Done</div>
<div style="position:absolute;left:74.37px;top:966.07px;font-size:26px;line-height:26px;font-weight:normal;color:#626266;white-space:nowrap;transform:scale(1.0129,1.0500);transform-origin:0 22.01px;-webkit-text-stroke:0.35px #626266;">User interface improvements</div>
<div style="position:absolute;left:541.44px;top:966.07px;font-size:26px;line-height:26px;font-weight:normal;color:#626266;white-space:nowrap;transform:scale(0.9775,1.0500);transform-origin:0 22.01px;-webkit-text-stroke:0.35px #626266;">Research &amp; Development</div>
<div style="position:absolute;left:1157.40px;top:966.07px;font-size:26px;line-height:26px;font-weight:normal;color:#626266;white-space:nowrap;transform:scale(1.0000,1.0500);transform-origin:0 22.01px;-webkit-text-stroke:0.35px #626266;">16:00</div>
<div style="position:absolute;left:1492.70px;top:966.07px;font-size:26px;line-height:26px;font-weight:normal;color:#626266;white-space:nowrap;transform:scale(1.0000,1.0500);transform-origin:0 22.01px;-webkit-text-stroke:0.35px #626266;">37:00</div>
<div style="position:absolute;left:1916.34px;top:966.07px;font-size:26px;line-height:26px;font-weight:normal;color:#626266;white-space:nowrap;transform:scale(1.0000,1.0500);transform-origin:0 22.01px;-webkit-text-stroke:0.35px #626266;">-21:00</div>
<div style="position:absolute;left:2261.45px;top:966.07px;font-size:26px;line-height:26px;font-weight:normal;color:#626266;white-space:nowrap;transform:scale(0.9514,1.0500);transform-origin:0 22.01px;-webkit-text-stroke:0.35px #626266;">100%</div>
<div style="position:absolute;left:2340.45px;top:966.07px;font-size:26px;line-height:26px;font-weight:normal;color:#626266;white-space:nowrap;transform:scale(0.9766,1.0500);transform-origin:0 22.01px;-webkit-text-stroke:0.35px #626266;">Done</div>
<div style="position:absolute;left:74.40px;top:1031.99px;font-size:26px;line-height:26px;font-weight:normal;color:#626266;white-space:nowrap;transform:scale(0.9997,1.0500);transform-origin:0 22.01px;-webkit-text-stroke:0.35px #626266;">Room 2: Decoration</div>
<div style="position:absolute;left:542.40px;top:1031.99px;font-size:26px;line-height:26px;font-weight:normal;color:#626266;white-space:nowrap;transform:scale(0.9972,1.0500);transform-origin:0 22.01px;-webkit-text-stroke:0.35px #626266;">Office Design</div>
<div style="position:absolute;left:1157.40px;top:1031.99px;font-size:26px;line-height:26px;font-weight:normal;color:#626266;white-space:nowrap;transform:scale(1.0000,1.0500);transform-origin:0 22.01px;-webkit-text-stroke:0.35px #626266;">24:00</div>
<div style="position:absolute;left:1492.70px;top:1031.99px;font-size:26px;line-height:26px;font-weight:normal;color:#626266;white-space:nowrap;transform:scale(1.0000,1.0500);transform-origin:0 22.01px;-webkit-text-stroke:0.35px #626266;">41:00</div>
<div style="position:absolute;left:1916.34px;top:1031.99px;font-size:26px;line-height:26px;font-weight:normal;color:#626266;white-space:nowrap;transform:scale(1.0000,1.0500);transform-origin:0 22.01px;-webkit-text-stroke:0.35px #626266;">-17:00</div>
<div style="position:absolute;left:2261.45px;top:1031.99px;font-size:26px;line-height:26px;font-weight:normal;color:#626266;white-space:nowrap;transform:scale(0.9514,1.0500);transform-origin:0 22.01px;-webkit-text-stroke:0.35px #626266;">100%</div>
<div style="position:absolute;left:2340.45px;top:1031.99px;font-size:26px;line-height:26px;font-weight:normal;color:#626266;white-space:nowrap;transform:scale(0.9766,1.0500);transform-origin:0 22.01px;-webkit-text-stroke:0.35px #626266;">Done</div>
<div style="position:absolute;left:74.40px;top:1097.91px;font-size:26px;line-height:26px;font-weight:normal;color:#626266;white-space:nowrap;transform:scale(1.0003,1.0500);transform-origin:0 22.01px;-webkit-text-stroke:0.35px #626266;">Planning and budget</div>
<div style="position:absolute;left:541.44px;top:1097.91px;font-size:26px;line-height:26px;font-weight:normal;color:#626266;white-space:nowrap;transform:scale(0.9775,1.0500);transform-origin:0 22.01px;-webkit-text-stroke:0.35px #626266;">Research &amp; Development</div>
<div style="position:absolute;left:1157.40px;top:1097.91px;font-size:26px;line-height:26px;font-weight:normal;color:#626266;white-space:nowrap;transform:scale(1.0000,1.0500);transform-origin:0 22.01px;-webkit-text-stroke:0.35px #626266;">40:00</div>
<div style="position:absolute;left:1492.70px;top:1097.91px;font-size:26px;line-height:26px;font-weight:normal;color:#626266;white-space:nowrap;transform:scale(1.0000,1.0500);transform-origin:0 22.01px;-webkit-text-stroke:0.35px #626266;">44:00</div>
<div style="position:absolute;left:1916.34px;top:1097.91px;font-size:26px;line-height:26px;font-weight:normal;color:#626266;white-space:nowrap;transform:scale(1.0000,1.0500);transform-origin:0 22.01px;-webkit-text-stroke:0.35px #626266;">-04:00</div>
<div style="position:absolute;left:2261.45px;top:1097.91px;font-size:26px;line-height:26px;font-weight:normal;color:#626266;white-space:nowrap;transform:scale(0.9514,1.0500);transform-origin:0 22.01px;-webkit-text-stroke:0.35px #626266;">100%</div>
<div style="position:absolute;left:2340.45px;top:1097.91px;font-size:26px;line-height:26px;font-weight:normal;color:#626266;white-space:nowrap;transform:scale(0.9766,1.0500);transform-origin:0 22.01px;-webkit-text-stroke:0.35px #626266;">Done</div>
<div style="position:absolute;left:74.40px;top:1163.83px;font-size:26px;line-height:26px;font-weight:normal;color:#626266;white-space:nowrap;transform:scale(0.9997,1.0500);transform-origin:0 22.01px;-webkit-text-stroke:0.35px #626266;">Room 1: Decoration</div>
<div style="position:absolute;left:542.40px;top:1163.83px;font-size:26px;line-height:26px;font-weight:normal;color:#626266;white-space:nowrap;transform:scale(0.9972,1.0500);transform-origin:0 22.01px;-webkit-text-stroke:0.35px #626266;">Office Design</div>
<div style="position:absolute;left:1157.40px;top:1163.83px;font-size:26px;line-height:26px;font-weight:normal;color:#626266;white-space:nowrap;transform:scale(1.0000,1.0500);transform-origin:0 22.01px;-webkit-text-stroke:0.35px #626266;">76:00</div>
<div style="position:absolute;left:1492.70px;top:1163.83px;font-size:26px;line-height:26px;font-weight:normal;color:#626266;white-space:nowrap;transform:scale(1.0000,1.0500);transform-origin:0 22.01px;-webkit-text-stroke:0.35px #626266;">41:00</div>
<div style="position:absolute;left:1925.00px;top:1163.83px;font-size:26px;line-height:26px;font-weight:normal;color:#626266;white-space:nowrap;transform:scale(1.0000,1.0500);transform-origin:0 22.01px;-webkit-text-stroke:0.35px #626266;">35:00</div>
<div style="position:absolute;left:2276.27px;top:1163.83px;font-size:26px;line-height:26px;font-weight:normal;color:#626266;white-space:nowrap;transform:scale(0.9309,1.0500);transform-origin:0 22.01px;-webkit-text-stroke:0.35px #626266;">54%</div>
<div style="position:absolute;left:2340.40px;top:1163.83px;font-size:26px;line-height:26px;font-weight:normal;color:#626266;white-space:nowrap;transform:scale(1.0000,1.0500);transform-origin:0 22.01px;-webkit-text-stroke:0.35px #626266;">In Progress</div>
</div></body></html>
